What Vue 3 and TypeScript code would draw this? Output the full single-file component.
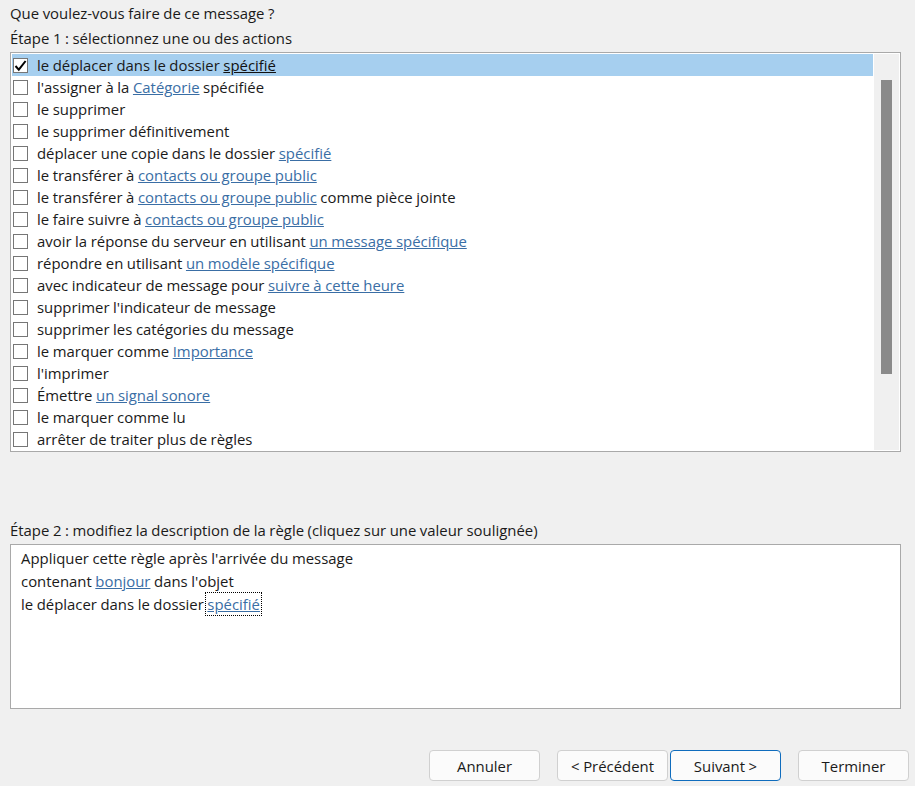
<template>
  <div class="page">
    <div class="question">Que voulez-vous faire de ce message ?</div>
    <div class="step step1">Étape 1 : sélectionnez une ou des actions</div>

    <div class="listbox">
      <ul class="rows">
        <li v-for="(row, i) in rows" :key="i" class="row" :class="{ selected: i === 0 }">
          <span class="check" :class="{ checked: i === 0 }">
            <svg v-if="i === 0" width="13" height="13" viewBox="0 0 13 13">
              <path d="M1.5 7 L4.8 10.6 L11.6 2" fill="none" stroke="#000" stroke-width="2" />
            </svg>
          </span>
          <span class="label">
            {{ row.before }}<a v-if="row.link" class="link">{{ row.link }}</a>{{ row.after }}
          </span>
        </li>
      </ul>
      <div class="scrollbar"><div class="thumb"></div></div>
    </div>

    <div class="step step2">Étape 2 : modifiez la description de la règle (cliquez sur une valeur soulignée)</div>

    <div class="description">
      <div>Appliquer cette règle après l'arrivée du message</div>
      <div>contenant <a class="link">bonjour</a> dans l'objet</div>
      <div>le déplacer dans le dossier <a class="link focused">spécifié</a></div>
    </div>

    <div class="buttons">
      <button class="btn">Annuler</button>
      <button class="btn prev">&lt; Précédent</button>
      <button class="btn primary">Suivant &gt;</button>
      <button class="btn finish">Terminer</button>
    </div>
  </div>
</template>

<script setup lang="ts">
interface Row {
  before: string;
  link?: string;
  after?: string;
}

const rows: Row[] = [
  { before: 'le déplacer dans le dossier ', link: 'spécifié' },
  { before: "l'assigner à la ", link: 'Catégorie', after: ' spécifiée' },
  { before: 'le supprimer' },
  { before: 'le supprimer définitivement' },
  { before: 'déplacer une copie dans le dossier ', link: 'spécifié' },
  { before: 'le transférer à ', link: 'contacts ou groupe public' },
  { before: 'le transférer à ', link: 'contacts ou groupe public', after: ' comme pièce jointe' },
  { before: 'le faire suivre à ', link: 'contacts ou groupe public' },
  { before: 'avoir la réponse du serveur en utilisant ', link: 'un message spécifique' },
  { before: 'répondre en utilisant ', link: 'un modèle spécifique' },
  { before: 'avec indicateur de message pour ', link: 'suivre à cette heure' },
  { before: "supprimer l'indicateur de message" },
  { before: 'supprimer les catégories du message' },
  { before: 'le marquer comme ', link: 'Importance' },
  { before: "l'imprimer" },
  { before: 'Émettre ', link: 'un signal sonore' },
  { before: 'le marquer comme lu' },
  { before: 'arrêter de traiter plus de règles' },
];
</script>

<style>
html,
body {
  background: #f0f0f0;
}
</style>

<style scoped>
.page {
  width: 915px;
  height: 786px;
  overflow: hidden;
  box-sizing: border-box;
  padding: 3px 6px 0 10px;
  background: #f0f0f0;
  color: #1a1a1a;
  font-family: "Open Sans", "Noto Sans", sans-serif;
  font-size: 14.9px;
  word-spacing: -0.3px;
  line-height: 20px;
  display: flex;
  flex-direction: column;
}
.step1 {
  margin-top: 5px;
}
.listbox {
  margin-top: 4px;
  width: 891px;
  height: 400px;
  box-sizing: border-box;
  border: 1px solid #a9a9a9;
  background: #fff;
  display: flex;
  padding: 1px;
}
.rows {
  list-style: none;
  margin: 0;
  padding: 0;
  width: 861px;
}
.row {
  height: 22px;
  display: flex;
  align-items: center;
  padding-left: 1px;
}
.row.selected {
  background: #a6cfef;
}
.row.selected .link {
  color: #111;
}
.check {
  width: 13px;
  height: 13px;
  border: 1px solid #767676;
  background: #fff;
  margin-right: 9px;
  display: block;
  flex: none;
}
.check svg {
  display: block;
}
.label {
  white-space: pre;
}
.link {
  color: #3a6ea5;
  text-decoration: underline;
}
.scrollbar {
  width: 25px;
  margin-left: 1px;
  background: #f0f0f0;
  padding: 26px 7px 0;
  box-sizing: border-box;
}
.thumb {
  width: 11px;
  height: 294px;
  background: #8a8a8a;
}
.step2 {
  margin-top: 68px;
}
.description {
  margin-top: 4px;
  width: 891px;
  height: 165px;
  box-sizing: border-box;
  border: 1px solid #a9a9a9;
  background: #fff;
  padding: 2px 10px;
  line-height: 23px;
}
.focused {
  outline: 1px dotted #000;
  margin-left: -1px;
  padding: 1px;
}
.buttons {
  margin-top: 41px;
  display: flex;
  justify-content: flex-end;
}
.btn {
  width: 111px;
  height: 31px;
  box-sizing: border-box;
  border: 1px solid #d0d0d0;
  border-radius: 4px;
  background: #fbfbfb;
  color: #1a1a1a;
  font: inherit;
  word-spacing: inherit;
  padding: 0;
}
.prev {
  margin-left: 17px;
}
.primary {
  margin-left: 2px;
  border-color: #0f6cbd;
}
.finish {
  margin-left: 17px;
}
</style>
